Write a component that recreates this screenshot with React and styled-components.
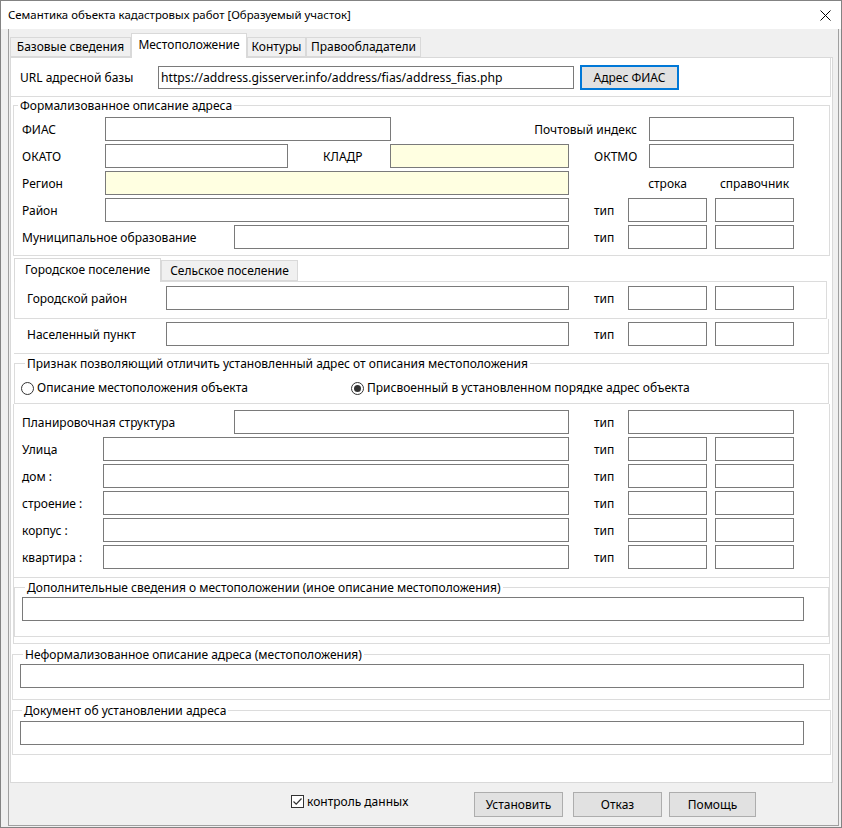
import React from 'react'
import styled, { createGlobalStyle } from 'styled-components'

const FONT = `"Noto Sans", "Liberation Sans", sans-serif`

const GlobalStyle = createGlobalStyle`
  html, body { margin: 0; padding: 0; background: #fff; }
  body { font-family: ${FONT}; font-size: 12px; color: #000; }
  * { box-sizing: border-box; }
`

const Win = styled.div`
  width: 842px;
  height: 828px;
  border: 1px solid #838383;
  background: #f0f0f0;
  display: flex;
  flex-direction: column;
  font-family: ${FONT};
  font-size: 12px;
  color: #000;
`
const TitleBar = styled.div`
  height: 28px;
  flex: none;
  background: #fff;
  display: flex;
  align-items: center;
  justify-content: space-between;
  padding: 0 10px 0 7px;
`
const Title = styled.span`
  font-size: 11.4px;
  line-height: 16px;
  white-space: nowrap;
`
const CloseBtn = styled.span`
  display: flex;
`
const Frame = styled.div`
  flex: 1;
  display: flex;
  flex-direction: column;
  margin: 0 2px 1px 7px;
  border: 1px solid #a0a0a0;
  border-top: none;
`
const TabStrip = styled.div`
  height: ${p => p.$h}px;
  flex: none;
  display: flex;
  align-items: flex-end;
  padding-left: ${p => p.$pl}px;
`
const Tab = styled.div`
  position: relative;
  z-index: ${p => (p.$active ? 1 : 0)};
  width: ${p => p.$w}px;
  height: ${p => p.$h}px;
  margin-bottom: ${p => (p.$active ? -1 : 0)}px;
  background: ${p => (p.$active ? '#fff' : '#f0f0f0')};
  border: 1px solid #d9d9d9;
  border-bottom: ${p => (p.$active ? 'none' : '1px solid #d9d9d9')};
  display: flex;
  align-items: center;
  justify-content: center;
  padding-bottom: ${p => (p.$active ? 2 : 0)}px;
  white-space: nowrap;
  line-height: 16px;
`
const TabPage = styled.div`
  height: 726px;
  flex: none;
  margin: 0 5px 0 1px;
  background: #fff;
  border: 1px solid #d9d9d9;
  display: flex;
  flex-direction: column;
`
const UrlPanel = styled.div`
  height: 39px;
  flex: none;
  margin-right: 1px;
  border-right: 1px solid #dcdcdc;
  border-bottom: 1px solid #dcdcdc;
  display: flex;
  align-items: center;
  padding-left: 9px;
`
const Group = styled.div`
  display: flex;
  flex-direction: column;
  flex: none;
  border: 1px solid #dcdcdc;
  margin: ${p => p.$m};
  padding: ${p => p.$p || '0'};
`
const Legend = styled.span`
  align-self: flex-start;
  margin: -8px 0 0 ${p => p.$ml}px;
  padding: 0 2px;
  height: 16px;
  line-height: 16px;
  background: #fff;
  white-space: nowrap;
`
const Fields = styled.div`
  display: flex;
  flex-direction: column;
  gap: 3px;
  padding: ${p => p.$p};
  border-bottom: ${p => (p.$sep ? '1px solid #dcdcdc' : 'none')};
`
const Row = styled.div`
  display: flex;
  align-items: center;
  height: 24px;
  flex: none;
`
const Label = styled.span`
  flex: none;
  width: ${p => p.$w}px;
  padding-left: ${p => p.$pl || 0}px;
  padding-right: ${p => p.$pr || 0}px;
  padding-top: 1px;
  text-align: ${p => p.$align || 'left'};
  white-space: nowrap;
  line-height: 16px;
`
const Input = styled.input`
  flex: none;
  width: ${p => p.$w}px;
  height: ${p => p.$h || 24}px;
  margin: ${p => p.$m || '0'};
  border: 1px solid #7a7a7a;
  border-radius: 0;
  background: ${p => (p.$yellow ? '#ffffe1' : '#fff')};
  padding: 0 2px;
  font-family: ${FONT};
  font-size: 12.2px;
  color: #000;
  outline: none;
`
const Button = styled.button`
  flex: none;
  width: ${p => p.$w}px;
  height: 25px;
  margin-left: ${p => p.$ml || 0}px;
  background: #e1e1e1;
  border: ${p => (p.$default ? '2px solid #0078d7' : '1px solid #adadad')};
  border-radius: 0;
  font-family: ${FONT};
  font-size: 12px;
  color: #000;
  padding: 0;
`
const SubPage = styled.div`
  height: ${p => p.$h}px;
  flex: none;
  margin: ${p => p.$m};
  border: 1px solid #dcdcdc;
  border-top: ${p => (p.$top ? '1px solid #dcdcdc' : 'none')};
  border-left: ${p => (p.$left ? '1px solid #dcdcdc' : 'none')};
  padding: ${p => p.$p};
`
const Boxed = styled.div`
  display: flex;
  flex-direction: column;
  flex: none;
  margin: 0 2px;
  border: 1px solid #dcdcdc;
  border-top: none;
  padding-bottom: 6px;
`
const RadioRow = styled.div`
  display: flex;
  align-items: center;
  height: 16px;
  margin-top: 8px;
  padding-left: 6px;
`
const RadioItem = styled.label`
  display: flex;
  align-items: center;
  gap: 3px;
  width: ${p => p.$w || 'auto'}px;
  white-space: nowrap;
  line-height: 16px;
`
const RadioCircle = styled.span`
  width: 13px;
  height: 13px;
  border-radius: 50%;
  border: 1px solid #333;
  background: #fff;
  display: flex;
  align-items: center;
  justify-content: center;
  &::after {
    content: '';
    width: 7px;
    height: 7px;
    border-radius: 50%;
    background: ${p => (p.$checked ? '#333' : 'transparent')};
  }
`
const BottomBar = styled.div`
  flex: 1;
  display: flex;
  align-items: center;
  padding-left: 282px;
`
const CheckWrap = styled.label`
  display: flex;
  align-items: center;
  gap: 3px;
  width: 183px;
  margin-top: -5px;
  white-space: nowrap;
`
const CheckBox = styled.span`
  width: 13px;
  height: 13px;
  border: 1px solid #333;
  background: #fff;
  display: flex;
  align-items: center;
  justify-content: center;
`

const TypeCells = ({ wide }) => (
  <>
    <Label $w={59} $pl={25}>тип</Label>
    {wide ? (
      <Input readOnly $w={166} />
    ) : (
      <>
        <Input readOnly $w={79} />
        <Input readOnly $w={79} $m="0 0 0 8px" />
      </>
    )}
  </>
)

const CloseIcon = () => (
  <svg width="11" height="11" viewBox="0 0 11 11">
    <path d="M0.5 0.5 L10.5 10.5 M10.5 0.5 L0.5 10.5" stroke="#000" strokeWidth="1" fill="none" />
  </svg>
)

const CheckIcon = () => (
  <svg width="11" height="11" viewBox="0 0 11 11">
    <path d="M1.5 5.5 L4.2 8.2 L9.5 2.5" stroke="#333" strokeWidth="1.2" fill="none" />
  </svg>
)

export default function App() {
  return (
    <>
      <GlobalStyle />
      <Win>
        <TitleBar>
          <Title>Семантика объекта кадастровых работ [Образуемый участок]</Title>
          <CloseBtn><CloseIcon /></CloseBtn>
        </TitleBar>
        <Frame>
          <TabStrip $h={28} $pl={1}>
            <Tab $w={121} $h={20}>Базовые сведения</Tab>
            <Tab $w={116} $h={25} $active>Местоположение</Tab>
            <Tab $w={59} $h={20}>Контуры</Tab>
            <Tab $w={115} $h={20}>Правообладатели</Tab>
          </TabStrip>
          <TabPage>
            <UrlPanel>
              <Label $w={138}>URL адресной базы</Label>
              <Input readOnly $w={416} $h={23} defaultValue="https://address.gisserver.info/address/fias/address_fias.php" />
              <Button $w={99} $ml={6} $default>Адрес ФИАС</Button>
            </UrlPanel>

            <Group $m="8px 2px 0 2px">
              <Legend $ml={4}>Формализованное описание адреса</Legend>
              <Fields $p="3px 0 6px 8px">
                <Row>
                  <Label $w={83}>ФИАС</Label>
                  <Input readOnly $w={286} />
                  <Label $w={258} $pr={12} $align="right">Почтовый индекс</Label>
                  <Input readOnly $w={145} />
                </Row>
                <Row>
                  <Label $w={83}>ОКАТО</Label>
                  <Input readOnly $w={183} />
                  <Label $w={102} $pl={35}>КЛАДР</Label>
                  <Input readOnly $w={179} $yellow />
                  <Label $w={80} $pl={25}>ОКТМО</Label>
                  <Input readOnly $w={145} />
                </Row>
                <Row>
                  <Label $w={83}>Регион</Label>
                  <Input readOnly $w={464} $yellow />
                  <Label $w={59} />
                  <Label $w={79} $align="center">строка</Label>
                  <Label $w={87} $pl={8} $align="center">справочник</Label>
                </Row>
                <Row>
                  <Label $w={83}>Район</Label>
                  <Input readOnly $w={464} />
                  <TypeCells />
                </Row>
                <Row>
                  <Label $w={212}>Муниципальное образование</Label>
                  <Input readOnly $w={335} />
                  <TypeCells />
                </Row>
              </Fields>
            </Group>

            <TabStrip $h={25} $pl={3}>
              <Tab $w={147} $h={24} $active>Городское поселение</Tab>
              <Tab $w={137} $h={21}>Сельское поселение</Tab>
            </TabStrip>
            <SubPage $h={38} $m="0 5px 0 3px" $p="4px 0 0 12px" $top $left>
              <Row>
                <Label $w={139}>Городской район</Label>
                <Input readOnly $w={403} />
                <TypeCells />
              </Row>
            </SubPage>
            <SubPage $h={35} $m="0 3px 0 3px" $p="3px 0 0 13px">
              <Row>
                <Label $w={139}>Населенный пункт</Label>
                <Input readOnly $w={403} />
                <TypeCells />
              </Row>
            </SubPage>

            <Group $m="9px 3px 0 3px" $p="0 0 7px 0">
              <Legend $ml={10}>Признак позволяющий отличить установленный адрес от описания местоположения</Legend>
              <RadioRow>
                <RadioItem $w={330}>
                  <RadioCircle />
                  Описание местоположения объекта
                </RadioItem>
                <RadioItem>
                  <RadioCircle $checked />
                  Присвоенный в установленном порядке адрес объекта
                </RadioItem>
              </RadioRow>
            </Group>

            <Boxed>
              <Fields $p="6px 0 8px 8px" $sep>
                <Row>
                  <Label $w={212}>Планировочная структура</Label>
                  <Input readOnly $w={335} />
                  <TypeCells wide />
                </Row>
                {['Улица', 'дом :', 'строение :', 'корпус :', 'квартира :'].map(t => (
                  <Row key={t}>
                    <Label $w={81}>{t}</Label>
                    <Input readOnly $w={466} />
                    <TypeCells />
                  </Row>
                ))}
              </Fields>
              <Group $m="9px 0 0 0" $p="0 0 15px 0">
                <Legend $ml={10}>Дополнительные сведения о местоположении (иное описание местоположения)</Legend>
                <Input readOnly $w={782} $m="1px 0 0 7px" />
              </Group>
            </Boxed>

            <Group $m="10px 2px 0 1px" $p="0 0 11px 0">
              <Legend $ml={10}>Неформализованное описание адреса (местоположения)</Legend>
              <Input readOnly $w={784} $m="1px 0 0 7px" />
            </Group>

            <Group $m="10px 1px 0 1px" $p="0 0 9px 0">
              <Legend $ml={9}>Документ об установлении адреса</Legend>
              <Input readOnly $w={784} $m="2px 0 0 7px" />
            </Group>
          </TabPage>
          <BottomBar>
            <CheckWrap>
              <CheckBox><CheckIcon /></CheckBox>
              контроль данных
            </CheckWrap>
            <Button $w={89}>Установить</Button>
            <Button $w={89} $ml={10}>Отказ</Button>
            <Button $w={87} $ml={7}>Помощь</Button>
          </BottomBar>
        </Frame>
      </Win>
    </>
  )
}
